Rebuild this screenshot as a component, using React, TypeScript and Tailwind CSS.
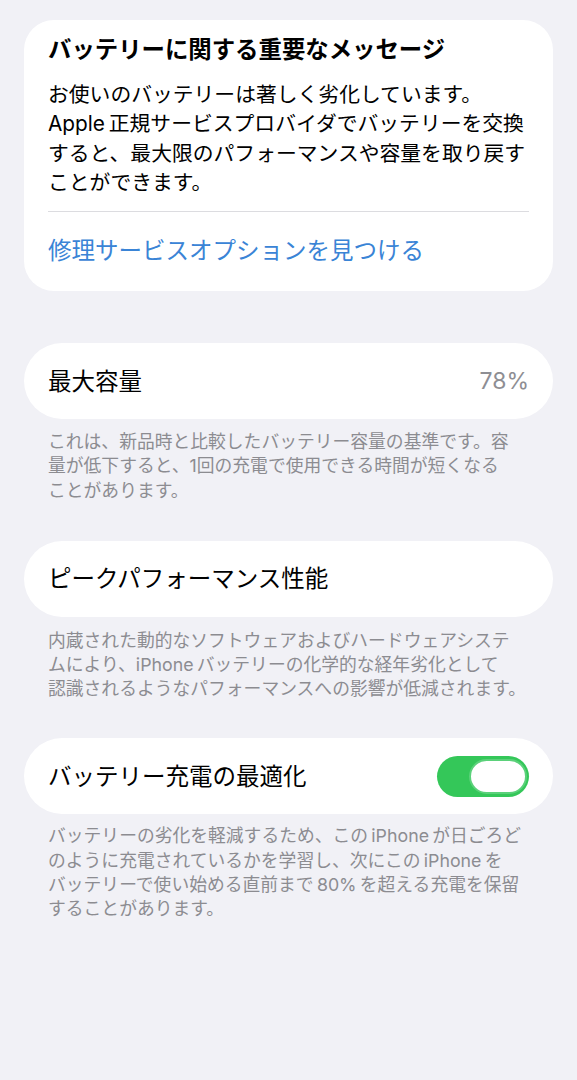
import React from "react";

const font = "font-['Inter','Noto_Sans_CJK_JP',sans-serif]";

const Footer = ({ lines }: { lines: string[] }) => (
  <div className="px-12 text-[17.8px] leading-[24.2px] text-[#8c8c91]">
    {lines.map((l, i) => (
      <div key={i} className="whitespace-nowrap">
        {l}
      </div>
    ))}
  </div>
);

const Row = ({ children }: { children: React.ReactNode }) => (
  <div className="mx-6 h-[76px] rounded-full bg-white px-6 flex items-center justify-between">
    {children}
  </div>
);

const App = () => {
  return (
    <div className={`${font} min-h-[1080px] w-full bg-[#f1f1f6] pt-5 text-black`}>
      {/* battery message */}
      <div className="mx-6 rounded-[30px] bg-white px-6 pt-4 pb-[26px]">
        <h2 className="text-[23.4px] leading-[28px] font-bold">
          バッテリーに関する重要なメッセージ
        </h2>
        <div className="mt-[16px] text-[20.8px] leading-[29.3px]">
          <div className="whitespace-nowrap">お使いのバッテリーは著しく劣化しています。</div>
          <div className="whitespace-nowrap">Apple&#8201;正規サービスプロバイダでバッテリーを交換</div>
          <div className="whitespace-nowrap">すると、最大限のパフォーマンスや容量を取り戻す</div>
          <div className="whitespace-nowrap">ことができます。</div>
        </div>
        <div className="mt-[14px] h-px bg-[#dcdce0]" />
        <div className="mt-[25px] text-[23.5px] leading-[28px] text-[#3a84d6]">
          修理サービスオプションを見つける
        </div>
      </div>

      <div className="mt-[52px]">
        <Row>
          <span className="text-[23.5px]">最大容量</span>
          <span className="text-[23px] text-[#8e8e93]">78%</span>
        </Row>
      </div>
      <div className="mt-[11px]">
        <Footer
          lines={[
            "これは、新品時と比較したバッテリー容量の基準です。容",
            "量が低下すると、1回の充電で使用できる時間が短くなる",
            "ことがあります。",
          ]}
        />
      </div>

      <div className="mt-[38px]">
        <Row>
          <span className="text-[23.5px]">ピークパフォーマンス性能</span>
        </Row>
      </div>
      <div className="mt-[12px]">
        <Footer
          lines={[
            "内蔵された動的なソフトウェアおよびハードウェアシステ",
            "ムにより、iPhone\u2009バッテリーの化学的な経年劣化として",
            "認識されるようなパフォーマンスへの影響が低減されます。",
          ]}
        />
      </div>

      <div className="mt-[37px]">
        <Row>
          <span className="text-[23.5px]">バッテリー充電の最適化</span>
          <div className="flex h-[41px] w-[92px] items-center justify-end rounded-full bg-[#34c759] pr-[2px]">
            <div className="h-[35px] w-[58px] rounded-full border-2 border-[#5bd17a] bg-white" />
          </div>
        </Row>
      </div>
      <div className="mt-[10px]">
        <Footer
          lines={[
            "バッテリーの劣化を軽減するため、この\u2009iPhone\u2009が日ごろど",
            "のように充電されているかを学習し、次にこの\u2009iPhone\u2009を",
            "バッテリーで使い始める直前まで\u200980%\u2009を超える充電を保留",
            "することがあります。",
          ]}
        />
      </div>
    </div>
  );
};

export default App;
